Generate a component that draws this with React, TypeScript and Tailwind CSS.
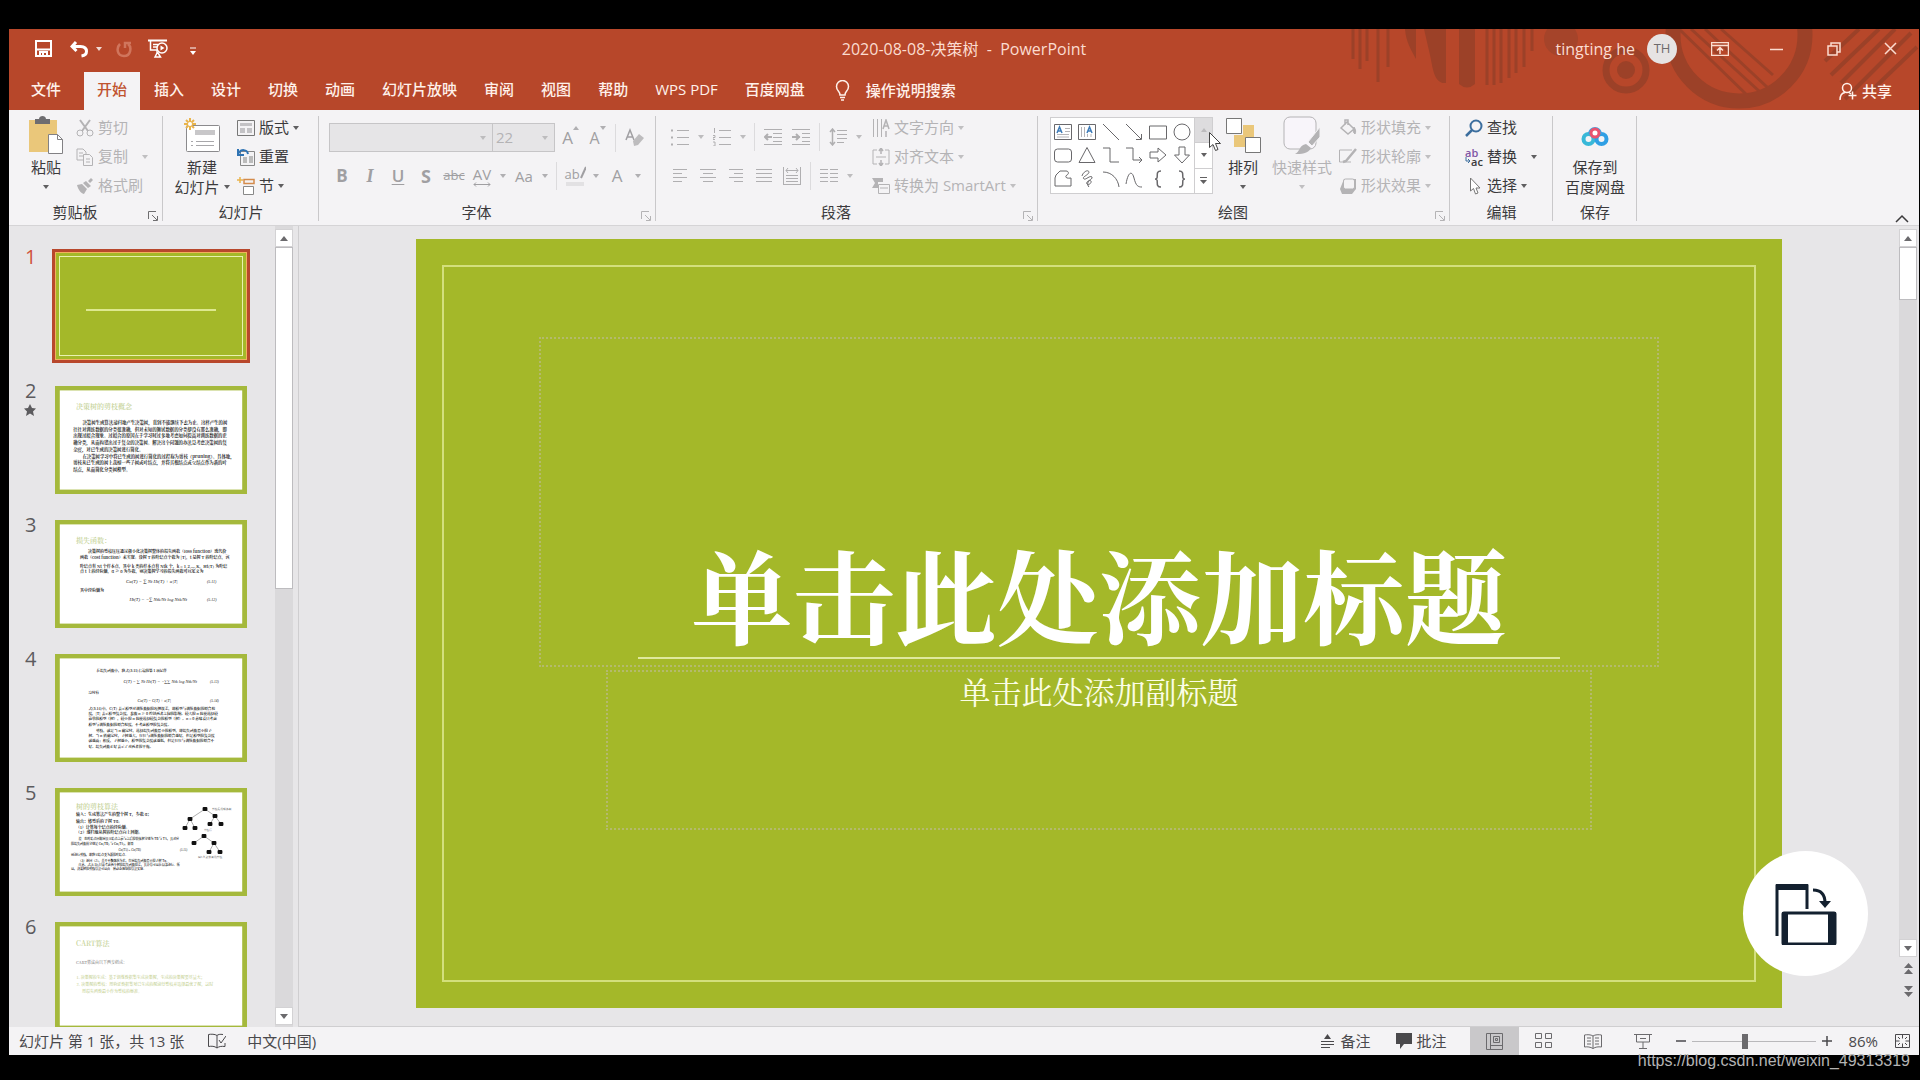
import { ReactNode } from "react";

const uiFont = "font-['Open_Sans','Noto_Sans_CJK_SC',sans-serif]";
const songFont = "font-['Noto_Serif_CJK_SC','Noto_Sans_CJK_SC',serif]";

/* ---------- small building blocks ---------- */

function Icon({
  children,
  w = 18,
  h = 18,
  className = "",
}: {
  children: ReactNode;
  w?: number;
  h?: number;
  className?: string;
}) {
  return (
    <svg
      width={w}
      height={h}
      viewBox={`0 0 ${w} ${h}`}
      fill="none"
      stroke="currentColor"
      aria-hidden="true"
      className={`shrink-0 ${className}`}
    >
      {children}
    </svg>
  );
}

function Caret({ up = false }: { up?: boolean }) {
  return (
    <Icon w={6} h={4} className="opacity-80">
      <path d={up ? "M0 4h6L3 0z" : "M0 0h6L3 4z"} fill="currentColor" stroke="none" />
    </Icon>
  );
}

function Group({
  label,
  width,
  launcher,
  children,
}: {
  label: string;
  width: string;
  launcher?: string;
  children: ReactNode;
}) {
  return (
    <section
      aria-label={label}
      className={`relative flex shrink-0 flex-col pt-[3px] after:absolute after:top-1.5 after:right-0 after:bottom-1 after:w-px after:bg-[#c9c8ca] ${width}`}
    >
      <div className="flex h-[87px]">{children}</div>
      <div className={`flex h-[26px] items-center justify-center text-[15px] ${launcher ? "pr-[22px]" : ""}`}>
        {label}
      </div>
      {launcher && (
        <button
          aria-label={`${label}设置`}
          className={`absolute right-[5px] bottom-1 ${launcher}`}
        >
          <Icon w={10} h={10}>
            <path d="M.5 8V.5H8M4 4l5 5M9.500 5v4.500H5" />
          </Icon>
        </button>
      )}
    </section>
  );
}

function RowButton({
  icon,
  label,
  caret,
  wideCaret,
  off,
}: {
  icon: ReactNode;
  label: string;
  caret?: boolean;
  wideCaret?: boolean;
  off?: boolean;
}) {
  return (
    <button
      className={`flex h-[29px] items-center gap-1 text-[15px] whitespace-nowrap ${
        off ? "text-[#b4b3b5]" : "text-[#3b3a3c]"
      }`}
    >
      <span className="flex w-[18px] justify-center">{icon}</span>
      <span>{label}</span>
      {caret && (
        <span className={wideCaret ? "ml-2.5" : ""}>
          <Caret />
        </span>
      )}
    </button>
  );
}

function BigButton({
  icon,
  lines,
  caret,
  off,
  width,
}: {
  icon: ReactNode;
  lines: string[];
  caret?: boolean;
  off?: boolean;
  width: string;
}) {
  return (
    <button
      className={`flex flex-col items-center text-[15px] leading-5 whitespace-nowrap ${width} ${
        off ? "text-[#b4b3b5]" : "text-[#3b3a3c]"
      }`}
    >
      <span className="flex h-11 items-center">{icon}</span>
      {lines.map((line, i) => (
        <span key={line} className="flex h-5 items-center gap-1">
          {line}
          {caret && lines.length > 1 && i === lines.length - 1 && <Caret />}
        </span>
      ))}
      {caret && lines.length === 1 && (
        <span className="flex h-5 items-center">
          <Caret />
        </span>
      )}
    </button>
  );
}

function Tool({ label, children }: { label: string; children: ReactNode }) {
  return (
    <button aria-label={label} className="flex h-7 w-7 items-center justify-center">
      {children}
    </button>
  );
}

function ToolCaret({ label }: { label: string }) {
  return (
    <button aria-label={label} className="flex h-7 w-3.5 items-center justify-center">
      <Caret />
    </button>
  );
}

function Sep() {
  return <span className="mx-1 h-7 w-px bg-[#dcdbdd]" />;
}

function ParaLines({ rows }: { rows: [number, number][] }) {
  return (
    <Icon w={16} h={14}>
      {rows.map(([a, b], i) => (
        <path key={i} d={`M${a} ${i * 4 + 0.5}H${b}`} />
      ))}
    </Icon>
  );
}

/* ---------- title bar ---------- */

function Backdrop() {
  return (
    <svg
      aria-hidden="true"
      viewBox="0 0 580 81"
      className="absolute top-0 right-0 h-[81px] w-[580px]"
      fill="none"
      stroke="#9c4128"
    >
      <g strokeWidth="3">
        <path d="M14 0v30M21 0v40M28 0v32M39 0v53M49 0v38" />
        <path d="M148 0v56M155 0v56M162 0v54M170 0v49M177 0v44M185 0v38M193 0v22" />
      </g>
      <path d="M66 0h11v30c-4-8-10-16-11-30z" fill="#9c4128" stroke="none" />
      <path d="M85 0h22v54c-12 1-13-14-16-28z" fill="#9c4128" stroke="none" />
      <path d="M120 0h16v55q-8 7-16 0z" fill="#9c4128" stroke="none" />
      <circle cx="222" cy="10" r="17" fill="#a5442a" stroke="none" />
      <circle cx="287" cy="41" r="20" strokeWidth="7" />
      <circle cx="287" cy="41" r="9" fill="#9c4128" stroke="none" />
      <circle cx="400" cy="6" r="66" strokeWidth="15" />
      <path d="M340 0l70 68M352 0l68 62M366 0l62 58M382 0l52 46" strokeWidth="3" />
      <path d="M520 0l-34 32M540 0l-48 46M556 0l-54 54M572 4l-66 66M578 18l-46 44" strokeWidth="4" />
    </svg>
  );
}

function TitleBar() {
  return (
    <div className="relative grid h-[43px] grid-cols-[1fr_auto_1fr] items-center pb-1 text-[#fbdcd0]">
      <div className="flex items-center pl-[26px] text-white">
        <button aria-label="保存">
          <Icon w={17} h={17}>
            <path d="M1 1h15v15H1zM1 9.500h15M5 16v-4h7v4M8 13v3" strokeWidth="2" />
          </Icon>
        </button>
        <button aria-label="撤消" className="ml-[18px]">
          <Icon w={18} h={18}>
            <path d="M6 2L2 6.500 6.500 11M2.500 6.500h8c4 0 6 2 6 5s-2 4-5 4.500" strokeWidth="3" />
          </Icon>
        </button>
        <button aria-label="撤消列表" className="ml-2">
          <Caret />
        </button>
        <button aria-label="重复" className="ml-3.5 text-[#d0755c]">
          <Icon w={16} h={18}>
            <path d="M4 4c-4 4-3 12 4 12s8-9 4-12M9 8V3h6" strokeWidth="2.500" />
          </Icon>
        </button>
        <button aria-label="从头开始放映" className="ml-4">
          <Icon w={21} h={19}>
            <path d="M0 1.500h19" strokeWidth="2" />
            <path d="M2.500 2v9h7M5 5.500h5M5 8h4M7 18l2.500-5 3 5zM9 11v3" strokeWidth="1.500" />
            <circle cx="14" cy="9" r="5" strokeWidth="1.500" />
            <path d="M12.500 6.500v5l4-2.500z" fill="currentColor" stroke="none" />
          </Icon>
        </button>
        <button aria-label="自定义快速访问工具栏" className="ml-[21px] pt-1">
          <Icon w={6} h={8}>
            <path d="M0 1h6" />
            <path d="M0 4h6L3 8z" fill="currentColor" stroke="none" />
          </Icon>
        </button>
      </div>
      <div className="text-[16px] whitespace-pre">2020-08-08-决策树{"  -  "}PowerPoint</div>
      <div className="flex items-center justify-end">
        <span className="text-[16px]">tingting he</span>
        <span className="mr-3.5 ml-3 flex size-[30px] items-center justify-center rounded-full bg-[#e6e3e3] text-[13px] text-[#6d6a6c]">
          TH
        </span>
        <button aria-label="功能区显示选项" className="flex w-[57px] justify-center">
          <Icon w={18} h={14}>
            <path d="M.5.500h17v13H.5zM.5 3.500h17M9 12V6M6 8.500L9 5.500l3 3" strokeWidth="1.500" />
          </Icon>
        </button>
        <button aria-label="最小化" className="flex w-[57px] justify-center">
          <Icon w={13} h={14}>
            <path d="M0 7.500h13" strokeWidth="1.500" />
          </Icon>
        </button>
        <button aria-label="还原" className="flex w-[57px] justify-center">
          <Icon w={14} h={14}>
            <path d="M1 4h9v9H1zM4 4V1h9v9h-3" strokeWidth="1.500" />
          </Icon>
        </button>
        <button aria-label="关闭" className="flex w-[57px] justify-center">
          <Icon w={13} h={13}>
            <path d="M1 1l11 11M12 1L1 12" strokeWidth="1.500" />
          </Icon>
        </button>
      </div>
    </div>
  );
}

const tabs = ["开始", "插入", "设计", "切换", "动画", "幻灯片放映", "审阅", "视图", "帮助", "WPS PDF", "百度网盘"];

function Tabs() {
  return (
    <div className="relative flex h-[38px] gap-px text-[15px] text-[#fff1ea]">
      <button className="w-[74px] pb-[3px] font-medium">文件</button>
      {tabs.map((tab) => (
        <button
          key={tab}
          className={`px-[13px] pb-[3px] font-medium ${tab === "开始" ? "bg-[#f4f3f5] text-[#c0532f]" : ""}`}
        >
          {tab}
        </button>
      ))}
      <button className="ml-4 flex items-center gap-4 pb-0.5 font-medium">
        <Icon w={15} h={21}>
          <path d="M5 15c0-4-3.500-4-3.500-8.500a6 6 0 0112 0C13.500 11 10 11 10 15zM5 17.500h5M6 20h3" strokeWidth="1.500" />
        </Icon>
        操作说明搜索
      </button>
      <button className="mr-[27px] ml-auto flex items-center gap-1 font-medium">
        <Icon w={19} h={18}>
          <circle cx="8" cy="6" r="4.500" strokeWidth="1.500" />
          <path d="M1 18c0-4 2-7 5-7.500M10 10.500l2 1.500M13.500 9.500v8M9.500 13.500h8" strokeWidth="1.500" />
        </Icon>
        共享
      </button>
    </div>
  );
}

/* ---------- ribbon ---------- */

const shapes: ReactNode[] = [
  <>
    <path d="M.5 1.500h17v15H.5z" />
    <path d="M11 5.500h5M11 8.500h5M3 11.500h12M3 14h12" stroke="#b5b4b7" />
    <path d="M3 10l2.500-6L8 10M4 8h3" stroke="#3f7cb8" strokeWidth="1.500" />
  </>,
  <>
    <path d="M.5 1.500h17v15H.5z" />
    <path d="M3.500 4v10M6.500 4v10M9.500 11v3M13 11v3" stroke="#b5b4b7" />
    <path d="M9 10l2.500-6 2.500 6M10 8h3" stroke="#3f7cb8" strokeWidth="1.500" />
  </>,
  <path d="M1 1l16 16" />,
  <path d="M1 1l15 15M16.500 11v5.500H11" />,
  <path d="M.5 3h17v13H.5z" />,
  <circle cx="9" cy="9" r="8" />,
  <rect x=".5" y="3" width="17" height="13" rx="3" />,
  <path d="M9 1.500L17 16.500H1z" />,
  <path d="M1 2h7v14h9" />,
  <path d="M1 2h7v12h9M14 11l3 3-3 3" />,
  <path d="M1 6h8V2l8 7-8 7v-4H1z" />,
  <path d="M6 1v8H1.500L9 17l7.500-8H12V1z" />,
  <path d="M2 5l4-4h6c3 0 3 3 1 4s-2 4 4 3v8H1V8z" />,
  <path d="M4 6c1-4 6-7 7-4 0 3-8 5-5 7 2 1 6-4 8-2 1 3-7 4-5 7 1 2 5-1 4-3-2-2-5 3-2 6" />,
  <path d="M1 2c9 0 15 7 16 15" />,
  <path d="M1 14C3 2 7 0 9 8s4 9 8 9" />,
  <path d="M12 1C5 1 11 9 6 9c5 0-1 8 6 8" strokeWidth="1.500" />,
  <path d="M6 1c7 0 1 8 6 8-5 0 1 8-6 8" strokeWidth="1.500" />,
];

function Ribbon() {
  return (
    <div className="relative flex h-[116px] overflow-hidden border-b border-[#d5d4d6] bg-[#f4f3f5] text-[#3b3a3c]">
      <Group label="剪贴板" width="w-[154px]" launcher="text-[#6f6e70]">
        <BigButton
          width="ml-[9px] w-14"
          lines={["粘贴"]}
          caret
          icon={
            <Icon w={34} h={38}>
              <path d="M0 4h28v32H0z" fill="#eac77a" stroke="none" />
              <path d="M6 8V3h4c0-4 7-4 7 0h4v5z" fill="#6e6d70" stroke="none" />
              <path d="M19.500 18.500h9l5 5v14h-14z" fill="#fff" stroke="#828184" />
              <path d="M28.500 18.500v5h5" stroke="#828184" />
            </Icon>
          }
        />
        <div className="pl-0.5">
          <RowButton
            off
            label="剪切"
            icon={
              <Icon>
                <path d="M4 1l8 11M14 1L6 12" strokeWidth="2" />
                <circle cx="4" cy="14" r="3" />
                <circle cx="14" cy="14" r="3" />
              </Icon>
            }
          />
          <RowButton
            off
            label="复制"
            caret
            wideCaret
            icon={
              <Icon>
                <path d="M1 1h6l3 3v8H1zM3 5h4M3 8h4" />
                <path d="M7.500 6.500h6l3 3v8h-9z" fill="#f4f3f5" />
                <path d="M10 11h4M10 14h4" />
              </Icon>
            }
          />
          <RowButton
            off
            label="格式刷"
            icon={
              <Icon>
                <path d="M1 8l5-1 5 5-3 5c-2 0-6-4-7-9zM7 6l3-2 5 5-3 2zM12 4l3-3 2 2-3 3z" fill="currentColor" stroke="none" />
              </Icon>
            }
          />
        </div>
      </Group>

      <Group label="幻灯片" width="w-[156px]">
        <BigButton
          width="ml-[5px] w-[68px]"
          lines={["新建", "幻灯片"]}
          caret
          icon={
            <Icon w={38} h={36}>
              <rect x="3.500" y="8.500" width="33" height="26" rx="1" fill="#fff" stroke="#8b8a8d" />
              <path d="M12 13h20v5H12z" fill="#c8c7c9" stroke="none" />
              <path d="M8 24.500h2M13 24.500h18M8 28.500h2M13 28.500h18" stroke="#a8a7aa" />
              <path d="M7 1v12M1 7h12M3 3l8 8M11 3l-8 8" stroke="#e9b44c" strokeWidth="2" />
              <circle cx="7" cy="7" r="2" fill="#fff" stroke="none" />
            </Icon>
          }
        />
        <div className="pl-px">
          <RowButton
            label="版式"
            caret
            icon={
              <Icon>
                <path d="M.5 1.500h17v15H.5z" stroke="#777" />
                <path d="M3 4h12v3H3zM3 9h5v5H3zM10 9h5v5h-5z" fill="#c3c2c5" stroke="none" />
              </Icon>
            }
          />
          <RowButton
            label="重置"
            icon={
              <Icon>
                <path d="M3.500 3.500h14v14h-14z" stroke="#888" />
                <path d="M6 9h4v6H6zM12 8h4v7h-4z" fill="#bbb" stroke="none" />
                <path d="M11 6c-1-5-7-5-9-1M1 1v6h6" stroke="#2f73b3" strokeWidth="2" />
              </Icon>
            }
          />
          <RowButton
            label="节"
            caret
            icon={
              <Icon>
                <path d="M3 0v6M0 3h6" stroke="#e9b44c" strokeWidth="1.500" />
                <path d="M7 2.500h10v4H7z" stroke="#d48b4b" strokeWidth="1.500" />
                <path d="M6.500 9.500h10v8h-10z" fill="#fff" stroke="#888" />
              </Icon>
            }
          />
        </div>
      </Group>

      <Group label="字体" width="w-[337px]" launcher="text-[#b4b3b5]">
        <div className="pt-2.5 pl-[9px] text-[#a09fa2]">
          <div className="flex items-center">
            <div className="ml-px flex h-[29px] border border-[#c6c5c7] bg-[#e6e5e7] text-[#b4b3b5]">
              <label className="flex w-[163px] items-center border-r border-[#c6c5c7] pr-1.5">
                <select aria-label="字体名称" className="h-full min-w-0 flex-1 appearance-none bg-transparent" />
                <Caret />
              </label>
              <label className="flex w-[61px] items-center pr-1.5 pl-[3px]">
                <select aria-label="字号" className="min-w-0 flex-1 appearance-none bg-transparent text-[15px]">
                  <option>22</option>
                </select>
                <Caret />
              </label>
            </div>
            <button aria-label="增大字号" className="ml-0.5 flex w-[27px] justify-center text-[17px] leading-6">
              A
              <Caret up />
            </button>
            <button aria-label="减小字号" className="flex w-[27px] justify-center text-[16px] leading-6">
              A
              <Caret />
            </button>
            <Sep />
            <Tool label="清除所有格式">
              <Icon w={20} h={20}>
                <path d="M2 12L6 2l4 10M3 9h6" strokeWidth="1.500" />
                <path d="M9 13l6-7 5 4-6 7-4 1z" fill="#bdbcbe" stroke="none" />
              </Icon>
            </Tool>
          </div>
          <div className="mt-2.5 flex items-center text-[17px]">
            <Tool label="加粗"><b>B</b></Tool>
            <Tool label="倾斜"><i className="font-['Liberation_Serif',serif] text-[18px] font-bold">I</i></Tool>
            <Tool label="下划线"><span className="font-semibold underline underline-offset-2">U</span></Tool>
            <Tool label="文字阴影"><span className="text-[18px] font-bold">S</span></Tool>
            <Tool label="删除线"><s className="text-[13px]">abc</s></Tool>
            <Tool label="字符间距">
              <span className="flex flex-col items-center text-[15px] leading-4">
                AV
                <Icon w={18} h={5}>
                  <path d="M1 2.500h16M3 .5L1 2.500l2 2M15 .5l2 2-2 2" />
                </Icon>
              </span>
            </Tool>
            <ToolCaret label="字符间距列表" />
            <Tool label="更改大小写"><span className="text-[15px]">Aa</span></Tool>
            <ToolCaret label="大小写列表" />
            <Sep />
            <Tool label="文本突出显示颜色">
              <span className="flex flex-col items-center text-[13px] leading-4">
                <span className="flex">
                  ab
                  <Icon w={6} h={14}>
                    <path d="M6 1L1 12" strokeWidth="2" />
                  </Icon>
                </span>
                <span className="h-1 w-[18px] bg-[#e2e1e3]" />
              </span>
            </Tool>
            <ToolCaret label="突出显示列表" />
            <Tool label="字体颜色">A</Tool>
            <ToolCaret label="字体颜色列表" />
          </div>
        </div>
      </Group>

      <Group label="段落" width="w-[382px]" launcher="text-[#b4b3b5]">
        <div className="w-[213px] pt-2.5 pl-2.5 text-[#b0afb1]">
          <div className="flex items-center">
            <Tool label="项目符号">
              <Icon w={18} h={18}>
                <path d="M6 2.500h12M6 9.500h12M6 16.500h12" />
                <path d="M0 2.500h2M0 9.500h2M0 16.500h2" strokeWidth="2" />
              </Icon>
            </Tool>
            <ToolCaret label="项目符号列表" />
            <Tool label="编号">
              <Icon w={18} h={18}>
                <path d="M6 2.500h12M6 9.500h12M6 16.500h12" />
                <path d="M1.500 0v5M0 7.500h2v2H0v2h2M0 14h2v4H0" />
              </Icon>
            </Tool>
            <ToolCaret label="编号列表" />
            <Sep />
            <Tool label="降低列表级别">
              <Icon w={18} h={18}>
                <path d="M0 1.500h18M9 5.500h9M9 9.500h9M9 13.500h9M0 16.500h18" />
                <path d="M8 9H1M4 6L1 9l3 3" strokeWidth="2" />
              </Icon>
            </Tool>
            <Tool label="提高列表级别">
              <Icon w={18} h={18}>
                <path d="M0 1.500h18M10 5.500h8M10 9.500h8M10 13.500h8M0 16.500h18" />
                <path d="M0 9h8M4 6l3 3-3 3" strokeWidth="2" />
              </Icon>
            </Tool>
            <Sep />
            <Tool label="行距">
              <Icon w={18} h={18}>
                <path d="M8 2.500h10M8 6.500h10M8 10.500h10M8 14.500h7" />
                <path d="M3.500 1v16M1 4l2.500-3L6 4M1 14l2.500 3L6 14" strokeWidth="1.500" />
              </Icon>
            </Tool>
            <ToolCaret label="行距列表" />
          </div>
          <div className="mt-[11px] flex items-center">
            <Tool label="左对齐"><ParaLines rows={[[1, 15], [1, 10], [1, 15], [1, 10]]} /></Tool>
            <Tool label="居中"><ParaLines rows={[[0, 16], [3, 13], [0, 16], [3, 13]]} /></Tool>
            <Tool label="右对齐"><ParaLines rows={[[1, 15], [6, 15], [1, 15], [6, 15]]} /></Tool>
            <Tool label="两端对齐"><ParaLines rows={[[0, 16], [0, 16], [0, 16], [0, 16]]} /></Tool>
            <Tool label="分散对齐">
              <Icon w={18} h={18}>
                <path d="M.5 0v18M17.500 0v18M3 3.500h12M5 1L3 3.500 5 6M13 1l2 2.500L13 6M3 8.500h12M3 11.500h12M3 14.500h12M0 17.500h18" />
              </Icon>
            </Tool>
            <Sep />
            <Tool label="分栏">
              <Icon w={18} h={14}>
                <path d="M0 .5h8M10 .5h8M0 4.500h8M10 4.500h8M0 8.500h8M10 8.500h8M0 12.500h8M10 12.500h8" />
              </Icon>
            </Tool>
            <ToolCaret label="分栏列表" />
          </div>
        </div>
        <div className="pl-[3px]">
          <RowButton
            off
            label="文字方向"
            caret
            icon={
              <Icon>
                <path d="M1.500 0v18M5.500 0v18M9.500 0v18" />
                <path d="M11 10l3-9 3 9M12 7h4M14 12v6" strokeWidth="1.500" />
              </Icon>
            }
          />
          <RowButton
            off
            label="对齐文本"
            caret
            icon={
              <Icon>
                <path d="M5 2H1v14h4M13 2h4v14h-4M4 9h10" />
                <path d="M9 0v6M7 3l2-3 2 3M9 18v-6M7 15l2 3 2-3" strokeWidth="1.500" />
              </Icon>
            }
          />
          <RowButton
            off
            label="转换为 SmartArt"
            caret
            icon={
              <Icon>
                <path d="M0 1h11v4H6v6H0l3-5z" fill="currentColor" stroke="none" />
                <path d="M6.500 7.500h11v9h-11zM8 11h8" fill="#f4f3f5" />
              </Icon>
            }
          />
        </div>
      </Group>

      <Group label="绘图" width="w-[412px]" launcher="text-[#b4b3b5]">
        <div className="mt-1 ml-3 flex h-[77px] w-[163px] shrink-0 border border-[#cfced0] bg-white">
          <div className="grid flex-1 grid-cols-6 place-items-center py-0.5 text-[#69686b]">
            {shapes.map((shape, i) => (
              <button key={i} aria-label={`形状 ${i + 1}`}>
                <Icon>{shape}</Icon>
              </button>
            ))}
          </div>
          <div className="relative flex w-[18px] flex-col border-l border-[#cfced0]">
            <button aria-label="上一行" className="flex flex-1 items-center justify-center bg-[#dddcde] text-[#b4b3b5]">
              <Caret up />
            </button>
            <button aria-label="下一行" className="flex flex-1 items-center justify-center border-y border-[#cfced0]">
              <Caret />
            </button>
            <button aria-label="其他" className="flex flex-1 items-center justify-center">
              <Icon w={7} h={7} className="opacity-80">
                <path d="M0 .5h7" />
                <path d="M0 3h7L3.500 7z" fill="currentColor" stroke="none" />
              </Icon>
            </button>
            {/* mouse pointer over the gallery scroller */}
            <Icon w={13} h={19} className="absolute top-[14px] left-[14px] z-10">
              <path d="M.5.500v15l3.500-3 2.500 6 2.500-1-2.500-6h5z" fill="#fff" stroke="#444" />
            </Icon>
          </div>
        </div>
        <BigButton
          width="ml-0.5 w-14 shrink-0"
          lines={["排列"]}
          caret
          icon={
            <Icon w={35} h={37}>
              <path d="M17 8h11v12H17zM8 18h13v12H8z" fill="#eac77a" stroke="none" />
              <path d="M.5 1.500h15v15H.5zM19.500 20.500h15v15h-15z" fill="#fff" stroke="#777" />
            </Icon>
          }
        />
        <BigButton
          width="w-[62px] shrink-0"
          lines={["快速样式"]}
          caret
          off
          icon={
            <Icon w={38} h={38}>
              <rect x="1" y="1" width="32" height="32" rx="6" fill="#f8f5fa" />
              <path d="M37 11v10l-8 9-4-4z" fill="#b4b3b5" stroke="#f4f3f5" />
              <path d="M23 28l5 4c-3 6-10 6-16 6 5-2 4-9 11-10z" fill="#b4b3b5" stroke="none" />
            </Icon>
          }
        />
        <div className="pl-1.5">
          <RowButton
            off
            label="形状填充"
            caret
            icon={
              <Icon>
                <path d="M2 9l6-6 7 7-6 5zM6 6V1h3v5" strokeWidth="1.500" />
                <path d="M15 8c2 3 2 5 1 7-2-1-2-4-1-7z" fill="currentColor" />
              </Icon>
            }
          />
          <RowButton
            off
            label="形状轮廓"
            caret
            icon={
              <Icon>
                <path d="M13 2H.5v12H12" />
                <path d="M17 1L7 13l-3 1" strokeWidth="2.500" />
              </Icon>
            }
          />
          <RowButton
            off
            label="形状效果"
            caret
            icon={
              <Icon>
                <path d="M1 12l4-10h12v10l-4 5H3z" fill="#b4b3b5" stroke="none" />
                <rect x="4.500" y="2" width="11" height="10" rx="2" fill="#f4f3f5" />
              </Icon>
            }
          />
        </div>
      </Group>

      <Group label="编辑" width="w-[103px]">
        <div className="pl-[15px]">
          <RowButton
            label="查找"
            icon={
              <Icon>
                <circle cx="11" cy="7" r="5.500" stroke="#3c6e9e" strokeWidth="2" />
                <path d="M7 11l-6 6" stroke="#3c6e9e" strokeWidth="2.500" />
              </Icon>
            }
          />
          <RowButton
            label="替换"
            caret
            wideCaret
            icon={
              <span className="flex flex-col text-[11px] leading-[9px] font-semibold">
                <span className="text-left text-[#7f56a5]">ab</span>
                <span className="flex items-center">
                  <Icon w={6} h={8}>
                    <path d="M1 0v4h4M3 2l2 2-2 2" stroke="#3c6e9e" />
                  </Icon>
                  ac
                </span>
              </span>
            }
          />
          <RowButton
            label="选择"
            caret
            icon={
              <Icon>
                <path d="M5.500 1v13l3-2.500 2 5.500 2.500-1-2-5h4z" fill="#fff" stroke="#777" />
              </Icon>
            }
          />
        </div>
      </Group>

      <Group label="保存" width="w-[84px]">
        <BigButton
          width="w-full"
          lines={["保存到", "百度网盘"]}
          icon={
            <Icon w={28} h={24}>
              <circle cx="7.500" cy="16" r="5" stroke="#38b8d8" strokeWidth="4" />
              <circle cx="20.500" cy="16" r="5" stroke="#2f9fe4" strokeWidth="4" />
              <path d="M9 11a5 5 0 1110 0" stroke="#3aa6e6" strokeWidth="4" />
              <circle cx="14" cy="10" r="4" fill="#fff" stroke="#e9536f" strokeWidth="3" />
            </Icon>
          }
        />
      </Group>

      <button aria-label="折叠功能区" className="mt-auto mr-2.5 mb-0.5 ml-auto">
        <Icon w={14} h={9}>
          <path d="M1 8l6-6 6 6" strokeWidth="1.500" />
        </Icon>
      </button>
    </div>
  );
}

/* ---------- slide thumbnails ---------- */

// [x, centre y, size, text] in a 960 x 540 slide
type Line = [number, number, number, string];

interface Slide {
  title?: string;
  titleY?: number;
  lines: Line[];
  formulas?: Line[];
  tree?: boolean;
  pale?: boolean;
}

const slides: Slide[] = [
  {
    title: "决策树的剪枝概念",
    lines: [
      [137, 182, 22, "决策树生成算法递归地产生决策树，直到不能继续下去为止。这样产生的树"],
      [91, 215, 22, "往往对训练数据的分类很准确，但对未知的测试数据的分类却没有那么准确，即"],
      [91, 249, 22, "出现过拟合现象。过拟合的原因在于学习时过多地考虑如何提高对训练数据的正"],
      [91, 283, 22, "确分类，从而构建出过于复杂的决策树。解决这个问题的办法是考虑决策树的复"],
      [91, 317, 22, "杂度，对已生成的决策树进行简化。"],
      [137, 350, 22, "在决策树学习中将已生成的树进行简化的过程称为剪枝（pruning）。具体地，"],
      [91, 384, 22, "剪枝从已生成的树上裁掉一些子树或叶结点，并将其根结点或父结点作为新的叶"],
      [91, 417, 22, "结点，从而简化分类树模型。"],
    ],
  },
  {
    title: "损失函数：",
    lines: [
      [165, 157, 20, "决策树的剪枝往往通过极小化决策树整体的损失函数（loss function）或代价"],
      [125, 187, 20, "函数（cost function）来实现。设树 T 的叶结点个数为 |T|，t 是树 T 的叶结点，该"],
      [125, 230, 20, "叶结点有 Nt 个样本点，其中 k 类的样本点有 Ntk 个，k = 1,2,…,K，Ht(T) 为叶结"],
      [125, 258, 20, "点 t 上的经验熵，α ≥ 0 为参数，则决策树学习的损失函数可以定义为"],
      [125, 353, 20, "其中经验熵为"],
    ],
    formulas: [
      [355, 307, 24, "Cα(T) = ∑ Nt Ht(T) + α|T|"],
      [760, 307, 20, "(5.11)"],
      [372, 395, 24, "Ht(T) = −∑ Ntk/Nt log Ntk/Nt"],
      [760, 395, 20, "(5.12)"],
    ],
  },
  {
    lines: [
      [207, 82, 18, "在损失函数中，将式(5.11)右端的第 1 项记作"],
      [167, 190, 18, "这时有"],
      [167, 272, 18, "式(5.14)中，C(T) 表示模型对训练数据的预测误差，即模型与训练数据的拟合程"],
      [167, 297, 18, "度，|T| 表示模型复杂度，参数 α ≥ 0 控制两者之间的影响。较大的 α 促使选择较"],
      [167, 323, 18, "简单的模型（树），较小的 α 促使选择较复杂的模型（树）。α = 0 意味着只考虑"],
      [167, 352, 18, "模型与训练数据的拟合程度，不考虑模型的复杂度。"],
      [205, 380, 18, "剪枝，就是当 α 确定时，选择损失函数最小的模型，即损失函数最小的子"],
      [167, 407, 18, "树。当 α 值确定时，子树越大，往往与训练数据的拟合越好，但是模型的复杂度"],
      [167, 433, 18, "就越高；相反，子树越小，模型的复杂度就越低，但是往往与训练数据的拟合不"],
      [167, 460, 18, "好。损失函数正好表示了对两者的平衡。"],
    ],
    formulas: [
      [342, 135, 22, "C(T) = ∑ Nt Ht(T) = −∑∑ Ntk log Ntk/Nt"],
      [775, 135, 18, "(5.13)"],
      [413, 230, 20, "Cα(T) = C(T) + α|T|"],
      [775, 230, 18, "(5.14)"],
    ],
  },
  {
    title: "树的剪枝算法",
    titleY: 91,
    tree: true,
    lines: [
      [105, 133, 20, "输入：生成算法产生的整个树 T，参数 α；"],
      [105, 165, 20, "输出：修剪后的子树 Tα。"],
      [105, 195, 20, "（1）计算每个结点的经验熵。"],
      [105, 223, 20, "（2）递归地从树的叶结点向上回缩。"],
      [117, 252, 15, "设一组叶结点回缩到其父结点之前与之后的整体树分别为 TB 与 TA，其对应"],
      [80, 277, 15, "的损失函数值分别是 Cα(TB) 与 Cα(TA)，如果"],
      [80, 333, 15, "则进行剪枝，即将父结点变为新的叶结点。"],
      [117, 360, 15, "（3）返回（2），直至不能继续为止，得到损失函数最小的子树 Tα。"],
      [117, 382, 15, "注意，式(5.15)只需考虑两个树的损失函数的差，其计算可以在局部进行。所"],
      [80, 402, 15, "以，决策树的剪枝算法可以由一种动态规划的算法实现。"],
    ],
    formulas: [
      [317, 307, 16, "Cα(TA) ≤ Cα(TB)"],
      [625, 307, 15, "(5.15)"],
    ],
  },
  {
    title: "CART算法",
    titleY: 107,
    pale: true,
    lines: [
      [105, 202, 20, "CART算法由以下两步组成："],
      [108, 277, 20, "1. 决策树的生成：基于训练数据集生成决策树，生成的决策树要尽量大；"],
      [108, 312, 20, "2. 决策树的剪枝：用验证数据集对已生成的树进行剪枝并选择最优子树，这时"],
      [135, 345, 20, "用损失函数最小作为剪枝的标准。"],
    ],
  },
];

const treeNodes = [
  [750, 105], [675, 155], [800, 140], [650, 200], [700, 200], [775, 180], [830, 180],
  [745, 240], [695, 275], [795, 275], [770, 320], [825, 320],
];

function SlidePreview({ slide }: { slide: Slide }) {
  return (
    <svg viewBox="0 0 960 540" className={`block h-[108px] w-48 ${songFont}`}>
      <rect width="960" height="540" fill="#a5b93c" />
      <rect x="24" y="22" width="912" height="496" fill="#fff" />
      {slide.title && (
        <text x="105" y={(slide.titleY ?? 102) + 12} fontSize="35" fontWeight="600" fill="#c6d39a">
          {slide.title}
        </text>
      )}
      {slide.lines.map(([x, y, size, text], i) => (
        <text
          key={text}
          x={x}
          y={y + 8}
          fontSize={size}
          fontWeight={slide.pale ? 500 : 700}
          fill={slide.pale ? (i === 0 ? "#7c7c7c" : "#bccb86") : "#222"}
        >
          {text}
        </text>
      ))}
      {slide.formulas?.map(([x, y, size, text]) => (
        <text key={text} x={x} y={y + 8} fontSize={size} fontStyle="italic" fill="#222" className="font-['Liberation_Serif',serif]">
          {text}
        </text>
      ))}
      {slide.tree && (
        <g>
          <path
            d="M750 105L675 155L650 200M675 155l25 45M750 105l50 35-25 40M800 140l30 40M745 240l-50 35M745 240l50 35-25 45M795 275l30 45"
            stroke="#777"
            strokeWidth="3"
            fill="none"
          />
          {treeNodes.map(([x, y]) => (
            <rect key={`${x}-${y}`} x={x - 12} y={y - 10} width="24" height="20" rx="5" fill="#111" />
          ))}
          <text x="785" y="110" fontSize="14" fill="#444">剪枝前的整体树</text>
          <text x="745" y="216" fontSize="13" fill="#444">剪枝后</text>
          <text x="715" y="349" fontSize="14" fill="#444">图5.6 决策树的剪枝</text>
        </g>
      )}
    </svg>
  );
}

function ScrollArrow({ up }: { up?: boolean }) {
  return (
    <button
      aria-label={up ? "向上滚动" : "向下滚动"}
      className="flex h-[18px] w-full items-center justify-center border border-[#d3d2d4] bg-white text-[#6b6a6d]"
    >
      <Icon w={8} h={5}>
        <path d={up ? "M0 5h8L4 0z" : "M0 0h8L4 5z"} fill="currentColor" stroke="none" />
      </Icon>
    </button>
  );
}

function SlideList() {
  return (
    <aside className="flex w-[290px] shrink-0 border-r border-[#cfced0]">
      <ol className="flex flex-1 flex-col gap-[26px] overflow-hidden pt-[26px] pl-4 text-[20px] leading-[10px] text-[#5c5b5e]">
        <li className="flex h-[108px] shrink-0">
          <span className="w-[30px] text-[#d0523b]">1</span>
          <button
            aria-label="幻灯片 1"
            className="-m-[3px] flex h-[114px] w-[198px] border-[3px] border-[#b8472c] bg-[#a4b829] p-px outline-1 -outline-offset-4 outline-[#f2b25c]"
          >
            <span className="m-[3px] flex h-[100px] flex-1 items-center justify-center border border-[#e9f2b0] pt-2">
              <span className="h-0.5 w-[130px] bg-[#dde88f]" />
            </span>
          </button>
        </li>
        {slides.map((slide, i) => (
          <li key={i} className="flex h-[108px] shrink-0">
            <span className="w-[30px]">
              {i + 2}
              {i === 0 && (
                <Icon w={12} h={12} className="mt-2 -ml-px">
                  <path d="M6 0l2 4 4 .5-3 3 1 4.500-4-2.500L2 12l1-4.500-3-3L4 4z" fill="currentColor" stroke="none" />
                </Icon>
              )}
            </span>
            <button aria-label={`幻灯片 ${i + 2}`} className="w-48">
              <SlidePreview slide={slide} />
            </button>
          </li>
        ))}
      </ol>
      <div className="mr-[5px] flex w-[18px] flex-col bg-[#dad9db] pt-[3px] pb-0.5">
        <ScrollArrow up />
        <div className="h-[342px] border border-[#bdbcbf] bg-white" />
        <div className="flex-1" />
        <ScrollArrow />
      </div>
    </aside>
  );
}

/* ---------- editing area ---------- */

function Editor() {
  return (
    <main className="flex min-w-0 flex-1 border-b border-[#cfced0]">
      <div className="flex min-w-0 flex-1 items-start justify-center pt-[13px]">
        <div className={`flex aspect-[1367/769] w-[85.4%] bg-[#a4b829] p-[26px] ${songFont}`}>
          <div className="flex flex-1 flex-col items-center border-2 border-[#d3df7c] pt-[70px]">
            <div className="flex h-[330px] w-[85.4%] flex-col items-center justify-end border-2 border-dotted border-[#b4ba6c] pb-1.5">
              <h1 className="mb-1 text-[102px] leading-[120px] font-bold whitespace-nowrap text-white">
                单击此处添加标题
              </h1>
              <div className="h-0.5 w-[82.6%] bg-[#dfe99c]" />
            </div>
            <div className="mt-[3px] h-[160px] w-[75.3%] border-2 border-dotted border-[#b4ba6c] text-center">
              <p className="text-[31px] leading-[38px] text-[#fbfde6]">单击此处添加副标题</p>
            </div>
          </div>
        </div>
      </div>
      <div className="mr-0.5 flex w-[18px] flex-col items-center pt-[3px] pb-[29px] text-[#6b6a6d]">
        <ScrollArrow up />
        <div className="flex w-full flex-1 flex-col bg-[#dad9db]">
          <div className="h-[53px] border border-[#bdbcbf] bg-white" />
        </div>
        <ScrollArrow />
        <button aria-label="上一张幻灯片" className="mt-1.5">
          <Icon w={9} h={11}>
            <path d="M0 5h9L4.500 0zM0 11h9L4.500 6z" fill="currentColor" stroke="none" />
          </Icon>
        </button>
        <button aria-label="下一张幻灯片" className="mt-3">
          <Icon w={9} h={11}>
            <path d="M0 0h9L4.500 5zM0 6h9L4.500 11z" fill="currentColor" stroke="none" />
          </Icon>
        </button>
      </div>
    </main>
  );
}

function StatusBar() {
  return (
    <footer className="flex h-7 shrink-0 items-center bg-[#f4f3f5] text-[15px] text-[#4a494c]">
      <span className="ml-2.5 whitespace-pre">幻灯片 第 1 张，共 13 张</span>
      <button aria-label="拼写检查" className="ml-6">
        <Icon w={18} h={16}>
          <path d="M9 2.500C7 1 3 1 .5 1.500v12c3-.5 6-.5 8.500 1.500V2.500c1-1 3-1.500 6-1M9 15c2-1.500 4-2 8-1.500V10M11 7l2 3 5-7" />
        </Icon>
      </button>
      <button className="ml-[21px]">中文(中国)</button>

      <button className="ml-auto flex items-center gap-1.5">
        <Icon w={13} h={14}>
          <path d="M0 7.500h13M0 10.500h13M0 13.500h9" />
          <path d="M3 5h7L6.500 0z" fill="currentColor" stroke="none" />
        </Icon>
        备注
      </button>
      <button className="ml-[25px] flex items-center gap-[3px]">
        <Icon w={18} h={16}>
          <path d="M1 0h16v11h-8l-4 5v-5H1z" fill="currentColor" stroke="none" />
        </Icon>
        批注
      </button>
      <div className="ml-6 flex h-full text-[#6b6a6d]">
        <button aria-label="普通视图" className="flex w-[49px] items-center justify-center bg-[#c9c8ca]">
          <Icon w={17} h={17}>
            <path d="M.5.500h16v16H.5zM4.500.500v16M7.500 3.500h6v6h-6zM9.500 5.500h2v2h-2zM4.500 12.500h12" />
          </Icon>
        </button>
        <button aria-label="幻灯片浏览" className="flex w-[49px] items-center justify-center">
          <Icon w={17} h={16}>
            <path d="M.5.500h6v5h-6zM10.500.500h6v5h-6zM.5 9.500h6v5h-6zM10.500 9.500h6v5h-6z" />
          </Icon>
        </button>
        <button aria-label="阅读视图" className="flex w-[50px] items-center justify-center">
          <Icon w={18} h={15}>
            <path d="M9 2C7 .5 3 .5.500 1v12c3-.5 6 0 8.500 1.500C11.500 13 14 12.500 17.500 13V1C15 .5 11 .5 9 2v12.500M3 4h4M3 7h4M3 10h4M11 4h4M11 7h4M11 10h4" />
          </Icon>
        </button>
        <button aria-label="幻灯片放映" className="flex w-[50px] items-center justify-center">
          <Icon w={18} h={16}>
            <path d="M0 1.500h18M2.500 2v7h13V2M9 9v6M5 15.500h8M6 5.500h6" />
          </Icon>
        </button>
      </div>
      <button aria-label="缩小" className="ml-2">
        <Icon w={10} h={10}>
          <path d="M0 5h10" strokeWidth="1.500" />
        </Icon>
      </button>
      <input
        type="range"
        aria-label="缩放"
        min={10}
        max={190}
        defaultValue={86}
        className="mx-1.5 h-4 w-[124px] appearance-none bg-[linear-gradient(#b9b8bb,#b9b8bb)] bg-[length:100%_1px] bg-center bg-no-repeat [&::-webkit-slider-thumb]:h-[15px] [&::-webkit-slider-thumb]:w-1.5 [&::-webkit-slider-thumb]:appearance-none [&::-webkit-slider-thumb]:bg-[#6b6a6d]"
      />
      <button aria-label="放大">
        <Icon w={10} h={10}>
          <path d="M0 5h10M5 0v10" strokeWidth="1.500" />
        </Icon>
      </button>
      <button className="ml-4">86%</button>
      <button aria-label="适应窗口" className="mr-[9px] ml-[17px]">
        <Icon w={15} h={14}>
          <path d="M.5.500h14v13H.5zM7.500.500v4M7.500 13.500v-4M.5 7h4M14.500 7h-4M3 3l2 2M12 3l-2 2M3 11l2-2M12 11l-2-2" />
        </Icon>
      </button>
    </footer>
  );
}

export default function App() {
  return (
    <div className={`relative flex h-screen flex-col overflow-hidden bg-black pt-[29px] pr-px pb-[25px] pl-[9px] ${uiFont}`}>
      <header className="relative shrink-0 bg-[#b7472a]">
        <Backdrop />
        <TitleBar />
        <Tabs />
      </header>
      <div className="shrink-0">
        <Ribbon />
      </div>
      <div className="flex min-h-0 flex-1 bg-[#e7e6e8]">
        <SlideList />
        <Editor />
      </div>
      <StatusBar />

      {/* floating rotate button */}
      <button
        aria-label="旋转屏幕"
        className="absolute right-[52px] bottom-[104px] flex size-[125px] items-center justify-center rounded-full bg-white text-[#13202f]"
      >
        <Icon w={62} h={62}>
          <path d="M2 53V3h30v23" strokeWidth="3" />
          <path d="M1 1h32v6H1z" fill="currentColor" stroke="none" />
          <rect x="8" y="30" width="52" height="31" rx="1" strokeWidth="3" />
          <path d="M7 29h6v32H7zM53 29h8v32h-8z" fill="currentColor" stroke="none" />
          <path d="M38 7c9 0 12 5 12 13" strokeWidth="3" />
          <path d="M44 18h12l-6 7z" fill="currentColor" stroke="none" />
        </Icon>
      </button>

      <a
        href="https://blog.csdn.net/weixin_49313319"
        className="absolute right-2.5 bottom-[7px] font-['Liberation_Sans',sans-serif] text-[16px] leading-6 text-[#b3b3b3]"
      >
        https://blog.csdn.net/weixin_49313319
      </a>
    </div>
  );
}
